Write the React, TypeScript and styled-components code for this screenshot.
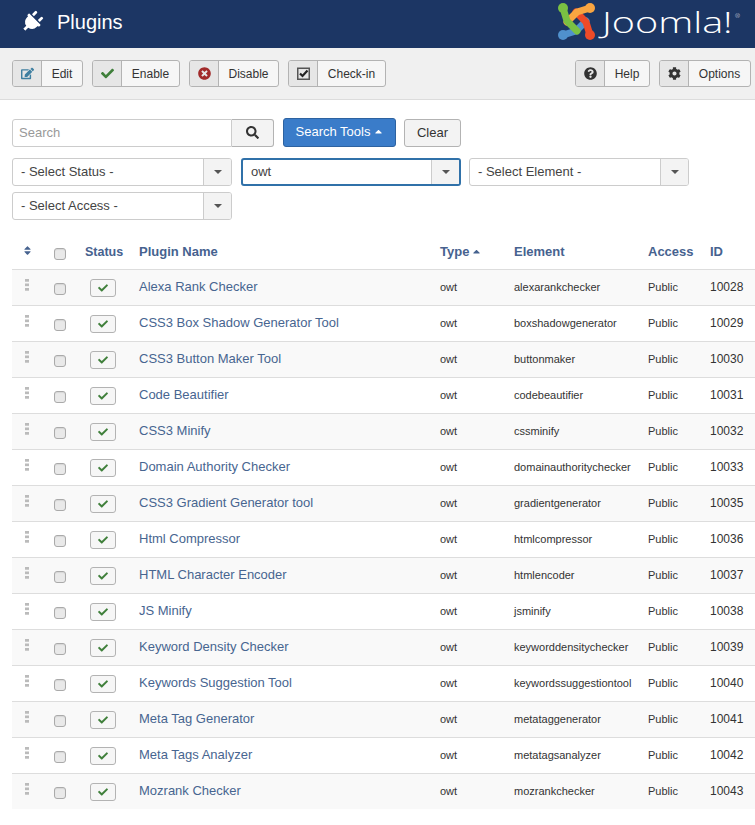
import React from "react";
import styled, { createGlobalStyle } from "styled-components";
import { FaPlug, FaCheck, FaTimesCircle, FaQuestionCircle, FaCog, FaSearch, FaEdit, FaSort, FaCaretUp } from "react-icons/fa";

const Global = createGlobalStyle`
  html, body { margin: 0; padding: 0; background: #fff; }
  body { font-family: "Liberation Sans", Arial, sans-serif; font-size: 13px; color: #333; width: 755px; height: 825px; overflow: hidden; }
  * { box-sizing: border-box; }
`;

const Header = styled.header`
  height: 48px; background: #1c3664; display: flex; align-items: center; justify-content: space-between; padding: 0 18px 0 21px;
`;
const TitleWrap = styled.div`display: flex; align-items: center; gap: 14px; color: #fff; margin-top: -4px;`;
const PlugIcon = styled(FaPlug)`transform: rotate(45deg); font-size: 22px;`;
const Title = styled.h1`margin: 0; font-size: 20px; font-weight: 400; color: #fff; line-height: 24px;`;
const LogoWrap = styled.div`display: flex; align-items: center; margin-top: -4px;`;
const LogoText = styled.span`
  font-family: "Open Sans", sans-serif; font-weight: 300; font-size: 30px; line-height: 36px; color: #fff; position: relative; width: 135px; margin-left: 6px; display: inline-block;
`;
const LogoWord = styled.span`display: inline-block; transform: scaleX(1.32); transform-origin: left center;`;
const Reg = styled.sup`font-size: 6px; line-height: 6px; position: absolute; right: -3px; top: 9px;`;

const Toolbar = styled.div`
  height: 52px; background: #f0f0f0; border-bottom: 1px solid #dcdcdc; display: flex; align-items: center; justify-content: space-between; padding: 0 4px 1px 12px;
`;
const ToolGroup = styled.div`display: flex; gap: 9px;`;
const ToolBtn = styled.div`
  height: 27px; display: flex; border: 1px solid #b3b3b3; border-radius: 3px; background: #f6f6f6; overflow: hidden; color: #333; font-size: 12px;
`;
const ToolIcon = styled.span<{ $c: string }>`
  width: 29px; display: flex; align-items: center; justify-content: center; background: #e6e6e6; border-right: 1px solid #b3b3b3; color: ${p => p.$c}; font-size: 13px;
`;
const ToolLabel = styled.span<{ $w: number }>`width: ${p => p.$w}px; display: flex; align-items: center; justify-content: center; padding-top: 1px;`;

const Filters = styled.div`padding: 19px 0 0 12px; width: 700px; display: flex; flex-direction: column; gap: 10px;`;
const SearchRow = styled.div`display: flex; align-items: center;`;
const SearchInput = styled.div`
  width: 220px; height: 28px; border: 1px solid #ccc; border-radius: 3px 0 0 3px; color: #999; padding: 0 6px 2px; display: flex; align-items: center; font-size: 13px; background: #fff;
`;
const SearchBtn = styled.div`
  width: 42px; height: 28px; border: 1px solid #b3b3b3; border-left: 0; border-radius: 0 3px 3px 0; background: #f3f3f3; display: flex; align-items: center; justify-content: center; color: #333; font-size: 13px; margin-right: 9px; padding-bottom: 2px;
`;
const PrimaryBtn = styled.div`
  width: 113px; height: 29px; background: #3a7cc9; border: 1px solid #2d62a0; border-radius: 3px; color: #fff; display: flex; align-items: center; justify-content: center; gap: 3px; font-size: 13px; margin: -1px 8px 0 0; padding: 0 0 2px 1px;
`;
const ClearBtn = styled.div`
  width: 57px; height: 28px; background: #f3f3f3; border: 1px solid #b3b3b3; border-radius: 3px; display: flex; align-items: center; justify-content: center; font-size: 13px; color: #333; padding-bottom: 1px;
`;
const SelectGrid = styled.div`display: flex; flex-wrap: wrap; gap: 6px 8px; margin-top: 1px;`;
const Select = styled.div<{ $focus?: boolean }>`
  width: 220px; height: 28px; display: flex; background: #fff; border-radius: 3px; overflow: hidden;
  border: ${p => (p.$focus ? "2px solid #3071a9" : "1px solid #ccc")};
  margin-left: ${p => (p.$focus ? "1px" : "0")};
  color: #444; font-size: 13px;
`;
const SelectText = styled.span`flex: 1; display: flex; align-items: center; padding: 0 0 2px 8px;`;
const SelectArrow = styled.span`
  width: 28px; background: #f3f3f3; border-left: 1px solid #ccc; display: flex; align-items: center; justify-content: center;
  &::after { content: ""; border-left: 4px solid transparent; border-right: 4px solid transparent; border-top: 4px solid #555; }
`;

const Table = styled.table`
  border-collapse: collapse; table-layout: fixed; width: 743px; margin: 15px 0 0 12px; font-size: 11px; color: #333;
`;
const Th = styled.th<{ $center?: boolean }>`
  height: 34px; padding: 0 8px; text-align: ${p => (p.$center ? "center" : "left")}; color: #46628f; font-size: 13px; font-weight: 700; white-space: nowrap;
`;
const StatusHead = styled.span`font-size: 12.5px;`;
const Row = styled.tr<{ $odd: boolean }>`background: ${p => (p.$odd ? "#f9f9f9" : "#fff")};`;
const Td = styled.td<{ $center?: boolean }>`
  height: 36px; padding: 0 8px; border-top: 1px solid #ddd; text-align: ${p => (p.$center ? "center" : "left")}; vertical-align: middle; white-space: nowrap;
`;
const NameLink = styled.a`color: #476590; font-size: 13px; position: relative; top: -1px;`;
const IdText = styled.span`font-size: 12px;`;
const Check = styled.span`
  display: inline-block; width: 12px; height: 12px; border: 1px solid #aaa; border-radius: 3px; background: #e9e9e9; box-shadow: inset 0 1px 1px rgba(0,0,0,.08); vertical-align: middle; position: relative; top: 1px;
`;
const StatusBtn = styled.span`
  display: inline-flex; width: 26px; height: 18px; border: 1px solid #b3b3b3; border-radius: 3px; background: #f6f6f6; align-items: center; justify-content: center; color: #3f7f3a; font-size: 10px; position: relative; top: 1px; left: -1px;
`;
const Grip = styled.span`
  display: inline-block; width: 4px; height: 12px; background-image: linear-gradient(#bbb 3px, transparent 3px); background-size: 4px 4.5px; position: relative; top: -1px;
`;
const TypeCaret = styled(FaCaretUp)`font-size: 11px; margin-left: -2px; vertical-align: -1px;`;

const bands: [string, string, number, number][] = [
  ["#5091cd", "M5 32 L18 28 L28 18", 5, 32],
  ["#ee4b28", "M32 32 L28 19 L18 9", 32, 32],
  ["#f9a541", "M32 5 L19 9 L9 19", 32, 5],
  ["#7ac143", "M5 5 L9 18 L19 28", 5, 5],
];

const JoomlaMark = () => (
  <svg width="38" height="38" viewBox="0 0 38 38" fill="none">
    {bands.map(([c, d, cx, cy]) => (
      <g key={c}>
        <path d={d} stroke={c} strokeWidth="7" strokeLinejoin="round" strokeLinecap="round" />
        <circle cx={cx} cy={cy} r="5" fill={c} />
      </g>
    ))}
  </svg>
);

const CheckInIcon = () => (
  <svg width="13" height="13" viewBox="0 0 13 13" fill="none">
    <rect x="0.75" y="1.25" width="11.5" height="11" stroke="#555" strokeWidth="1.5" />
    <path d="M3 6.5 L5.5 9 L10.5 3.5" stroke="#222" strokeWidth="2.2" />
  </svg>
);

const rows: [string, string, number][] = [
  ["Alexa Rank Checker", "alexarankchecker", 10028],
  ["CSS3 Box Shadow Generator Tool", "boxshadowgenerator", 10029],
  ["CSS3 Button Maker Tool", "buttonmaker", 10030],
  ["Code Beautifier", "codebeautifier", 10031],
  ["CSS3 Minify", "cssminify", 10032],
  ["Domain Authority Checker", "domainauthoritychecker", 10033],
  ["CSS3 Gradient Generator tool", "gradientgenerator", 10035],
  ["Html Compressor", "htmlcompressor", 10036],
  ["HTML Character Encoder", "htmlencoder", 10037],
  ["JS Minify", "jsminify", 10038],
  ["Keyword Density Checker", "keyworddensitychecker", 10039],
  ["Keywords Suggestion Tool", "keywordssuggestiontool", 10040],
  ["Meta Tag Generator", "metataggenerator", 10041],
  ["Meta Tags Analyzer", "metatagsanalyzer", 10042],
  ["Mozrank Checker", "mozrankchecker", 10043],
];

export default function App() {
  return (
    <>
      <Global />
      <Header>
        <TitleWrap>
          <PlugIcon />
          <Title>Plugins</Title>
        </TitleWrap>
        <LogoWrap>
          <JoomlaMark />
          <LogoText><LogoWord>Joomla!</LogoWord><Reg>®</Reg></LogoText>
        </LogoWrap>
      </Header>
      <Toolbar>
        <ToolGroup>
          <ToolBtn><ToolIcon $c="#3f7fa0"><FaEdit /></ToolIcon><ToolLabel $w={40}>Edit</ToolLabel></ToolBtn>
          <ToolBtn><ToolIcon $c="#3f7f3a"><FaCheck /></ToolIcon><ToolLabel $w={57}>Enable</ToolLabel></ToolBtn>
          <ToolBtn><ToolIcon $c="#a12a2a"><FaTimesCircle /></ToolIcon><ToolLabel $w={59}>Disable</ToolLabel></ToolBtn>
          <ToolBtn><ToolIcon $c="#333"><CheckInIcon /></ToolIcon><ToolLabel $w={67}>Check-in</ToolLabel></ToolBtn>
        </ToolGroup>
        <ToolGroup>
          <ToolBtn><ToolIcon $c="#333"><FaQuestionCircle /></ToolIcon><ToolLabel $w={44}>Help</ToolLabel></ToolBtn>
          <ToolBtn><ToolIcon $c="#333"><FaCog /></ToolIcon><ToolLabel $w={61}>Options</ToolLabel></ToolBtn>
        </ToolGroup>
      </Toolbar>
      <Filters>
        <SearchRow>
          <SearchInput>Search</SearchInput>
          <SearchBtn><FaSearch /></SearchBtn>
          <PrimaryBtn>Search Tools <FaCaretUp size={11} /></PrimaryBtn>
          <ClearBtn>Clear</ClearBtn>
        </SearchRow>
        <SelectGrid>
          <Select><SelectText>- Select Status -</SelectText><SelectArrow /></Select>
          <Select $focus><SelectText>owt</SelectText><SelectArrow /></Select>
          <Select><SelectText>- Select Element -</SelectText><SelectArrow /></Select>
          <Select><SelectText>- Select Access -</SelectText><SelectArrow /></Select>
        </SelectGrid>
      </Filters>
      <Table>
        <colgroup>
          <col style={{ width: 30 }} />
          <col style={{ width: 35 }} />
          <col style={{ width: 54 }} />
          <col style={{ width: 301 }} />
          <col style={{ width: 74 }} />
          <col style={{ width: 134 }} />
          <col style={{ width: 62 }} />
          <col style={{ width: 53 }} />
        </colgroup>
        <thead>
          <tr>
            <Th $center><FaSort size={11} /></Th>
            <Th $center><Check /></Th>
            <Th $center><StatusHead>Status</StatusHead></Th>
            <Th>Plugin Name</Th>
            <Th>Type <TypeCaret /></Th>
            <Th>Element</Th>
            <Th>Access</Th>
            <Th>ID</Th>
          </tr>
        </thead>
        <tbody>
          {rows.map(([name, el, id], i) => (
            <Row key={id} $odd={i % 2 === 0}>
              <Td $center><Grip /></Td>
              <Td $center><Check /></Td>
              <Td $center><StatusBtn><FaCheck /></StatusBtn></Td>
              <Td><NameLink>{name}</NameLink></Td>
              <Td>owt</Td>
              <Td>{el}</Td>
              <Td>Public</Td>
              <Td><IdText>{id}</IdText></Td>
            </Row>
          ))}
        </tbody>
      </Table>
    </>
  );
}
